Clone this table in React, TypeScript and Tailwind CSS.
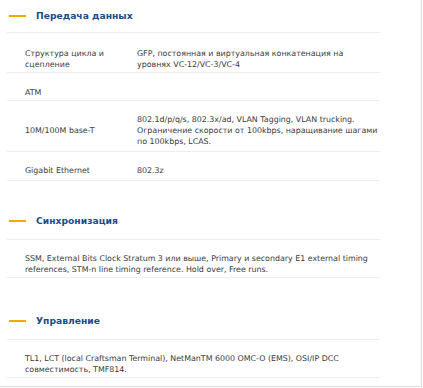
import React from "react";

const font = { fontFamily: '"DejaVu Sans", Verdana, sans-serif' };

function Heading({ title, tall }: { title: string; tall?: boolean }) {
  return (
    <div
      className={`flex items-center border-b border-[#eceef0] pl-[2px] ${tall ? "h-[37px]" : "h-[33px]"}`}
    >
      <div className="h-[2px] w-[17px] bg-[#f7a600]" />
      <div className="ml-[10px] text-[9.2px] font-bold text-[#1b4c8a]">{title}</div>
    </div>
  );
}

function Row({
  label,
  children,
  pad,
}: {
  label?: React.ReactNode;
  children?: React.ReactNode;
  pad: string;
}) {
  return (
    <div
      className={`flex items-center border-b border-[#eceef0] pl-[18px] text-[7.9px] leading-[10.8px] text-[#3a3a3a] ${pad}`}
    >
      <div className="w-[112px] shrink-0 whitespace-nowrap">{label}</div>
      <div className="whitespace-nowrap">{children}</div>
    </div>
  );
}

function Text({ children, pad }: { children: React.ReactNode; pad: string }) {
  return (
    <div
      className={`border-b border-[#eceef0] pl-[18px] text-[7.9px] leading-[10.8px] text-[#3a3a3a] whitespace-nowrap ${pad}`}
    >
      {children}
    </div>
  );
}

export default function App() {
  return (
    <div className="h-[388px] w-[423px] bg-white" style={font}>
      <div className="h-[387px] w-[422px] border-b border-r border-[#dcdcdc]">
        <div className="ml-[7px] w-[373px]">
          <Heading title="Передача данных" />
          <Row label={<>Структура цикла и<br />сцепление</>} pad="pt-[16px] pb-[1px]">
            GFP, постоянная и виртуальная конкатенация на
            <br />
            уровнях VC-12/VC-3/VC-4
          </Row>
          <Row label="ATM" pad="pt-[15px] pb-[2px]" />
          <Row label="10M/100M base-T" pad="pt-[14px] pb-[3px]">
            802.1d/p/q/s, 802.3x/ad, VLAN Tagging, VLAN trucking.
            <br />
            Ограничение скорости от 100kbps, наращивание шагами
            <br />
            по 100kbps, LCAS.
          </Row>
          <Row label="Gigabit Ethernet" pad="pt-[14px] pb-[3px]">
            802.3z
          </Row>

          <div className="mt-[22px]">
            <Heading title="Синхронизация" tall />
            <Text pad="pt-[14.5px] pb-[1px]">
              SSM, External Bits Clock Stratum 3 или выше, Primary и secondary E1 external timing
              <br />
              references, STM-n line timing reference. Hold over, Free runs.
            </Text>
          </div>

          <div className="mt-[25px]">
            <Heading title="Управление" tall />
            <Text pad="pt-[14.5px] pb-[1px]">
              TL1, LCT (local Craftsman Terminal), NetManTM 6000 OMC-O (EMS), OSI/IP DCC
              <br />
              совместимость, TMF814.
            </Text>
          </div>
        </div>
      </div>
    </div>
  );
}
